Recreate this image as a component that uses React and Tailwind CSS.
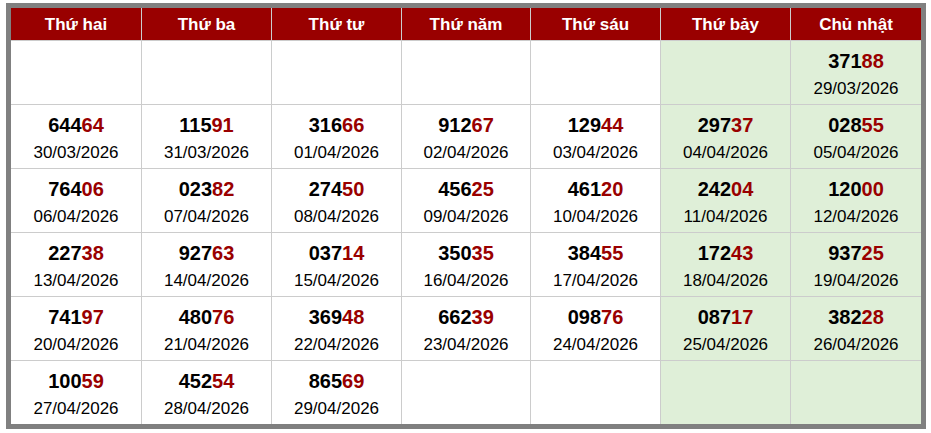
import React from "react";

const DAYS = ["Thứ hai", "Thứ ba", "Thứ tư", "Thứ năm", "Thứ sáu", "Thứ bảy", "Chủ nhật"];

// each week: 7 cells, null = empty
const WEEKS = [
  [null, null, null, null, null, null, ["37188", "29/03/2026"]],
  [
    ["64464", "30/03/2026"],
    ["11591", "31/03/2026"],
    ["31666", "01/04/2026"],
    ["91267", "02/04/2026"],
    ["12944", "03/04/2026"],
    ["29737", "04/04/2026"],
    ["02855", "05/04/2026"],
  ],
  [
    ["76406", "06/04/2026"],
    ["02382", "07/04/2026"],
    ["27450", "08/04/2026"],
    ["45625", "09/04/2026"],
    ["46120", "10/04/2026"],
    ["24204", "11/04/2026"],
    ["12000", "12/04/2026"],
  ],
  [
    ["22738", "13/04/2026"],
    ["92763", "14/04/2026"],
    ["03714", "15/04/2026"],
    ["35035", "16/04/2026"],
    ["38455", "17/04/2026"],
    ["17243", "18/04/2026"],
    ["93725", "19/04/2026"],
  ],
  [
    ["74197", "20/04/2026"],
    ["48076", "21/04/2026"],
    ["36948", "22/04/2026"],
    ["66239", "23/04/2026"],
    ["09876", "24/04/2026"],
    ["08717", "25/04/2026"],
    ["38228", "26/04/2026"],
  ],
  [
    ["10059", "27/04/2026"],
    ["45254", "28/04/2026"],
    ["86569", "29/04/2026"],
    null,
    null,
    null,
    null,
  ],
];

const Cell = ({ data, weekend }) => (
  <div
    className={`h-[63px] pt-[4px] flex flex-col items-center justify-center ${
      weekend ? "bg-[#dfefd8]" : "bg-white"
    }`}
  >
    {data && (
      <>
        <p className="text-[20px] leading-[26px] font-bold text-black">
          {data[0].slice(0, 3)}
          <span className="text-[#990000]">{data[0].slice(3)}</span>
        </p>
        <p className="mt-[2px] text-[17px] leading-[26px] text-black">{data[1]}</p>
      </>
    )}
  </div>
);

const App = () => {
  return (
    <div className="w-[931px] h-[433px] bg-white pt-[3px] pl-[6px] font-['Liberation_Sans',Arial,sans-serif]">
      <div className="w-[920px] border-[5px] border-[#808080]">
        <div className="grid grid-cols-[130px_129px_129px_128px_129px_129px_130px] gap-px bg-[#cccccc]">
          {DAYS.map((d) => (
            <div
              key={d}
              className="h-[32px] pt-px bg-[#990000] flex items-center justify-center text-white font-bold text-[17px]"
            >
              {d}
            </div>
          ))}
          {WEEKS.map((week, wi) =>
            week.map((cell, ci) => (
              <Cell key={`${wi}-${ci}`} data={cell} weekend={ci >= 5} />
            ))
          )}
        </div>
      </div>
    </div>
  );
};

export default App;
